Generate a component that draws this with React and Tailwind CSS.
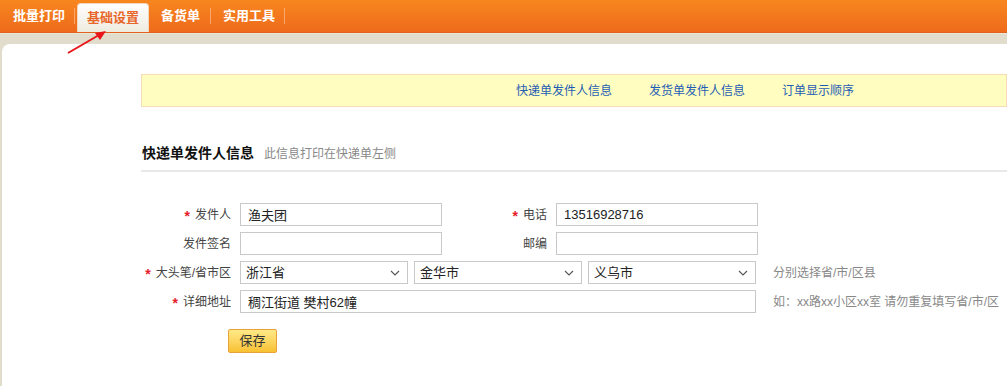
import React from "react";

const font = { fontFamily: '"Liberation Sans", "Noto Sans CJK SC", sans-serif' };

function Sep() {
  return <div className="w-px h-[16px] bg-[#f9a76a] self-center" />;
}

function Chevron() {
  return (
    <svg width="10" height="6" viewBox="0 0 10 6" className="shrink-0">
      <path d="M1 1 L5 5 L9 1" fill="none" stroke="#555" strokeWidth="1.1" />
    </svg>
  );
}

function Label({ req, w, children }) {
  return (
    <div className={`${w} shrink-0 h-[23px] flex items-center justify-end text-[12px] text-[#444] pr-[9px]`}>
      {req && <span className="text-[#e4202a] text-[14px] font-bold leading-none mr-[5px] mt-[2px]">*</span>}
      <span className="leading-none">{children}</span>
    </div>
  );
}

function Input({ w, value }) {
  return (
    <input
      readOnly
      defaultValue={value}
      className={`${w} h-[23px] border border-[#c9c9c9] bg-white px-[7px] text-[13px] text-[#222] outline-none`}
    />
  );
}

function Select({ value }) {
  return (
    <div className="w-[168px] h-[23px] border border-[#c9c9c9] bg-white flex items-center justify-between pl-[5px] pr-[7px]">
      <span className="text-[13px] text-[#222]">{value}</span>
      <Chevron />
    </div>
  );
}

export default function App() {
  return (
    <div style={font} className="relative w-[1007px] h-[386px] overflow-hidden bg-[#e1dccb]">
      {/* top nav */}
      <div className="h-[33px] bg-gradient-to-b from-[#f8861f] to-[#ee6a1b] flex items-end pl-[13px] border-b border-[#e2611c]">
        <div className="h-full flex items-center text-white font-bold text-[13px]">批量打印</div>
        <div className="h-full flex items-center ml-[9px]"><Sep /></div>
        <div className="ml-[2px] w-[72px] h-[29px] rounded-t-[4px] bg-gradient-to-b from-[#fefefe] to-[#eeebdf] border border-b-0 border-[#f3d7bd] flex items-center justify-center text-[#e8662a] font-bold text-[13px]">
          基础设置
        </div>
        <div className="h-full flex items-center ml-[12px] text-white font-bold text-[13px]">备货单</div>
        <div className="h-full flex items-center ml-[10px]"><Sep /></div>
        <div className="h-full flex items-center ml-[12px] text-white font-bold text-[13px]">实用工具</div>
        <div className="h-full flex items-center ml-[9px]"><Sep /></div>
      </div>
      <div className="h-px bg-[#ece7da]" />
      <div className="h-[10px]" />

      {/* white panel */}
      <div className="ml-[2px] bg-white rounded-tl-[8px] h-[400px] pt-[30px]">
        <div className="ml-[139px] h-[33px] bg-[#fffdc0] border border-[#f6dbb6] flex items-center pl-[374px] gap-[37px] text-[12px] text-[#1f5db4]">
          <span>快递单发件人信息</span>
          <span>发货单发件人信息</span>
          <span>订单显示顺序</span>
        </div>

        <div className="ml-[139px] mt-[36px] pb-[6px] border-b-2 border-[#e8e8e8] flex items-baseline">
          <span className="ml-[1px] text-[14px] font-bold text-[#111]">快递单发件人信息</span>
          <span className="ml-[10px] text-[12px] text-[#888]">此信息打印在快递单左侧</span>
        </div>

        <div className="ml-[139px] mt-[31px] flex flex-col gap-[6px]">
          <div className="flex items-center">
            <Label req w="w-[99px]">发件人</Label>
            <Input w="w-[202px]" value="渔夫团" />
            <Label req w="w-[114px]">电话</Label>
            <Input w="w-[202px]" value="13516928716" />
          </div>
          <div className="flex items-center">
            <Label w="w-[99px]">发件签名</Label>
            <Input w="w-[202px]" value="" />
            <Label w="w-[114px]">邮编</Label>
            <Input w="w-[202px]" value="" />
          </div>
          <div className="flex items-center">
            <Label req w="w-[99px]">大头笔/省市区</Label>
            <div className="flex gap-[6px]">
              <Select value="浙江省" />
              <Select value="金华市" />
              <Select value="义乌市" />
            </div>
            <span className="ml-[17px] text-[12px] text-[#888]">分别选择省/市/区县</span>
          </div>
          <div className="flex items-center">
            <Label req w="w-[99px]">详细地址</Label>
            <Input w="w-[516px]" value="稠江街道 樊村62幢" />
            <span className="ml-[17px] text-[12px] text-[#888] whitespace-nowrap">如：xx路xx小区xx室 请勿重复填写省/市/区</span>
          </div>
          <div className="mt-[10px] ml-[87px]">
            <div className="w-[49px] h-[24px] rounded-[2px] border border-[#e9a13a] bg-gradient-to-b from-[#ffe985] to-[#f8c12f] flex items-center justify-center text-[13px] text-[#333]">
              保存
            </div>
          </div>
        </div>
      </div>

      {/* annotation arrow */}
      <svg className="absolute left-0 top-0 pointer-events-none" width="130" height="70">
        <line x1="68" y1="53" x2="99" y2="35" stroke="#e8141a" strokeWidth="2" />
        <polygon points="106,31 95,33 100,40" fill="#e8141a" />
      </svg>
    </div>
  );
}
